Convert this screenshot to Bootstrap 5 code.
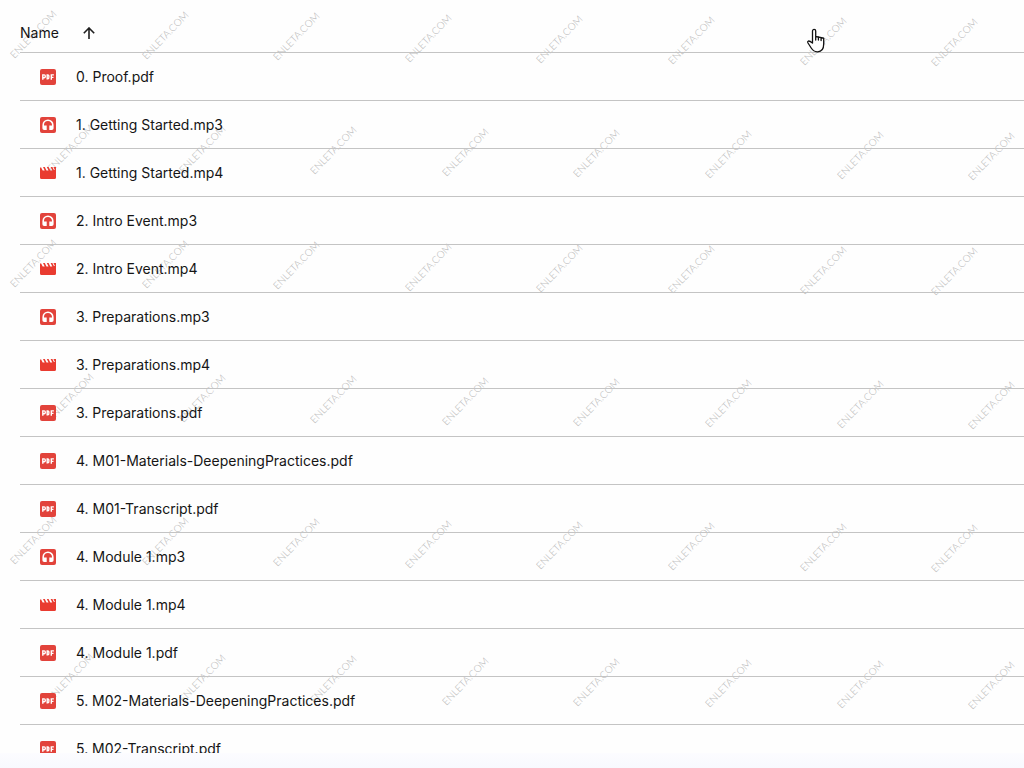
<!DOCTYPE html>
<html lang="en">
<head>
<meta charset="utf-8">
<meta name="viewport" content="width=device-width, initial-scale=1">
<title>Files</title>
<link href="https://cdn.jsdelivr.net/npm/bootstrap@5.3.0/dist/css/bootstrap.min.css" rel="stylesheet">
<style>
  body { font-family: Inter, "Open Sans", sans-serif; font-size: 14px; line-height: 20px; color: #151515; background: #fefefe; }
  .listing { min-height: 0; padding-left: 20px; }
  .files { border-collapse: separate; border-spacing: 0; }
  .files th, .files td { border-bottom: 1px solid #c4c4c4; }
  .files th { height: 53px; padding: 13px 0 0; }
  .files td { height: 48px; padding: 1px 0 0; font-weight: 400; }
  .files .kind { width: 56px; padding-left: 20px; }
  .files svg { display: block; }
  .sort { color: inherit; font-size: 14px; font-weight: 400; line-height: 20px; }
  .strip { height: 15px; background: linear-gradient(#fcfcff, #f8f9fe); }
  .marks text { font: 300 10px Lato, sans-serif; fill: #b4b4b4; text-anchor: middle; }
  .pointer { left: 806px; top: 28px; }
</style>
</head>
<body class="vh-100 d-flex flex-column overflow-hidden">
<svg class="d-none" aria-hidden="true">
  <symbol id="pdf" viewBox="0 0 16 16"><rect width="16" height="16" rx="2" fill="#e2433b"/><path d="M2.8 10.700V5.900h1.400q1.100 0 1.100 1.400T4.200 8.700H3.500M7.200 5.900v4h.6q1.100 0 1.100-2T7.800 5.900zM11.300 10.700V5.900h2.600M11.300 8.400h2.200" fill="none" stroke="#fff" stroke-width="1.4"/></symbol>
  <symbol id="mp3" viewBox="0 0 16 16"><rect width="16" height="16" rx="2" fill="#e2433b"/><path d="M5.600 12.200H4.200q-1 0-1-1V8a4.800 4.800 0 0 1 9.600 0v3.200q0 1-1 1h-1.400" fill="none" stroke="#fff" stroke-width="1.6"/><path d="M4 8.400h2.700V13H4zM9.300 8.400H12V13H9.300z" fill="#fff"/></symbol>
  <symbol id="mp4" viewBox="0 0 16 16"><path d="M0 3.200Q0 2.200 1 2.200l1.700 3.200h2L3 2h1.800l1.700 3.400h2L6.800 2h1.800l1.700 3.400h2L10.600 2h1.800l1.500 3h1L13.400 2H16v10.500q0 1.500-1.500 1.500h-13Q0 14 0 12.500z" fill="#e93b30"/></symbol>
</svg>
<svg class="marks position-absolute top-0 start-0 w-100 h-100 z-n1" aria-hidden="true"></svg>
<main class="listing flex-fill overflow-hidden">
  <table class="files w-100">
    <thead><tr><th colspan="2" scope="col"><button type="button" class="sort btn p-0 border-0 d-flex align-items-center gap-4">Name
      <svg width="12" height="12" viewBox="0 0 12 12" fill="none" stroke="#1f1f1f" stroke-width="1.6" aria-hidden="true"><path d="M6 12V1M.8 6.200 6 1l5.200 5.200"/></svg></button></th></tr></thead>
    <tbody id="rows"></tbody>
  </table>
</main>
<footer class="strip flex-shrink-0"></footer>
<svg class="pointer position-absolute" width="20" height="26" viewBox="0 0 20 26" fill="#fff" stroke="#111" stroke-width="1.3" stroke-linejoin="round" stroke-linecap="round" aria-hidden="true"><path d="M6.500 15V3a1.600 1.600 0 0 1 3.200 0v5.500l8 1.700V16q0 7.500-6 7.800-4 .2-6.500-3.800L2 15q-.8-1.500.5-2 1.200-.2 4 2M9.700 8.500V12M12.400 9v3M15.100 9.600v3"/></svg>
<script>
  const files = ["0. Proof.pdf", "1. Getting Started.mp3", "1. Getting Started.mp4", "2. Intro Event.mp3", "2. Intro Event.mp4",
    "3. Preparations.mp3", "3. Preparations.mp4", "3. Preparations.pdf", "4. M01-Materials-DeepeningPractices.pdf", "4. M01-Transcript.pdf",
    "4. Module 1.mp3", "4. Module 1.mp4", "4. Module 1.pdf", "5. M02-Materials-DeepeningPractices.pdf", "5. M02-Transcript.pdf"];
  document.getElementById("rows").innerHTML = files.map(name =>
    `<tr><td class="kind"><svg width="16" height="16" aria-hidden="true"><use href="#${name.slice(-3)}"/></svg></td><td>${name}</td></tr>`).join("");

  // Staggered rows of diagonal marks, each row sinking slightly to the right
  let marks = "";
  [[33, 34], [70, 148], [33, 263], [70, 397], [33, 540], [70, 677]].forEach(([left, top]) => {
    for (let i = 0; i < 8; i++) {
      const x = Math.round(left + i * 131.6), y = Math.round(top + i * 1.2);
      marks += `<text transform="translate(${x} ${y}) rotate(-46)" y="4">ENLETA.COM</text>`;
    }
  });
  document.querySelector(".marks").innerHTML = marks;
</script>
<script src="https://cdn.jsdelivr.net/npm/bootstrap@5.3.0/dist/js/bootstrap.bundle.min.js"></script>
</body>
</html>
